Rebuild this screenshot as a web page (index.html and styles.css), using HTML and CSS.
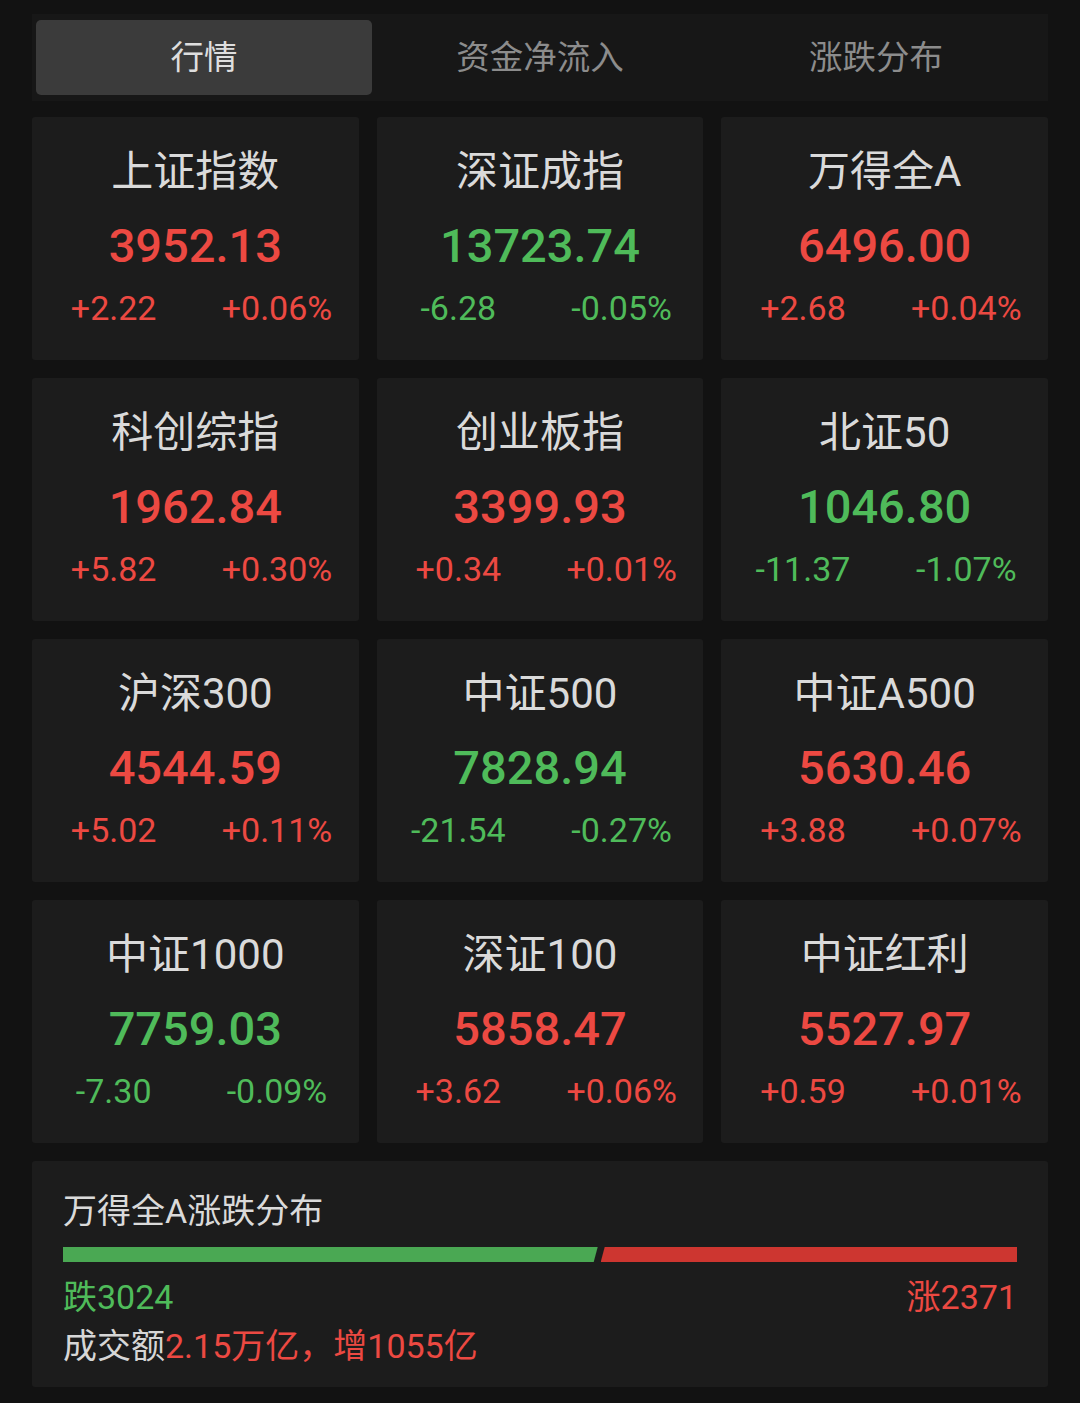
FILE: index.html
```html
<!DOCTYPE html>
<html lang="zh-CN">
<head>
  <meta charset="UTF-8">
  <meta name="viewport" content="width=device-width, initial-scale=1.0">
  <title>行情</title>
  <link rel="stylesheet" href="styles.css">
</head>
<body>
  <div class="tabs">
    <div class="tab active">行情</div>
    <div class="tab">资金净流入</div>
    <div class="tab">涨跌分布</div>
  </div>

  <div class="grid">
    <div class="card up">
      <div class="name">上证指数</div>
      <div class="price">3952.13</div>
      <div class="change"><span>+2.22</span><span>+0.06%</span></div>
    </div>
    <div class="card down">
      <div class="name">深证成指</div>
      <div class="price">13723.74</div>
      <div class="change"><span>-6.28</span><span>-0.05%</span></div>
    </div>
    <div class="card up">
      <div class="name">万得全A</div>
      <div class="price">6496.00</div>
      <div class="change"><span>+2.68</span><span>+0.04%</span></div>
    </div>

    <div class="card up">
      <div class="name">科创综指</div>
      <div class="price">1962.84</div>
      <div class="change"><span>+5.82</span><span>+0.30%</span></div>
    </div>
    <div class="card up">
      <div class="name">创业板指</div>
      <div class="price">3399.93</div>
      <div class="change"><span>+0.34</span><span>+0.01%</span></div>
    </div>
    <div class="card down">
      <div class="name">北证50</div>
      <div class="price">1046.80</div>
      <div class="change"><span>-11.37</span><span>-1.07%</span></div>
    </div>

    <div class="card up">
      <div class="name">沪深300</div>
      <div class="price">4544.59</div>
      <div class="change"><span>+5.02</span><span>+0.11%</span></div>
    </div>
    <div class="card down">
      <div class="name">中证500</div>
      <div class="price">7828.94</div>
      <div class="change"><span>-21.54</span><span>-0.27%</span></div>
    </div>
    <div class="card up">
      <div class="name">中证A500</div>
      <div class="price">5630.46</div>
      <div class="change"><span>+3.88</span><span>+0.07%</span></div>
    </div>

    <div class="card down">
      <div class="name">中证1000</div>
      <div class="price">7759.03</div>
      <div class="change"><span>-7.30</span><span>-0.09%</span></div>
    </div>
    <div class="card up">
      <div class="name">深证100</div>
      <div class="price">5858.47</div>
      <div class="change"><span>+3.62</span><span>+0.06%</span></div>
    </div>
    <div class="card up">
      <div class="name">中证红利</div>
      <div class="price">5527.97</div>
      <div class="change"><span>+0.59</span><span>+0.01%</span></div>
    </div>
  </div>

  <div class="dist">
    <div class="dist-title">万得全A涨跌分布</div>
    <div class="bar">
      <div class="bar-down" style="width: 56.05%"></div>
      <div class="bar-up"></div>
    </div>
    <div class="counts">
      <span class="green">跌3024</span>
      <span class="red">涨2371</span>
    </div>
    <div class="turnover">成交额<span class="red">2.15万亿，增1055亿</span></div>
  </div>
</body>
</html>
```

FILE: styles.css
```css
:root {
  --red: #ec4942;
  --green: #4fbb5a;
  --bar-red: #cd3630;
  --bar-green: #4aa853;
  --card-bg: #1c1c1c;
}

* {
  box-sizing: border-box;
}

body {
  margin: 0;
  padding: 14px 32px 0;
  background: #121212;
  font-family: Roboto, "Noto Sans CJK SC", sans-serif;
  color: #dcdcdc;
}

.tabs {
  display: grid;
  grid-template-columns: repeat(3, 1fr);
  padding: 6px 4px;
  background: #171717;
  margin-bottom: 16px;
}

.tab {
  height: 75px;
  padding-bottom: 6px;
  display: flex;
  align-items: center;
  justify-content: center;
  font-size: 33.5px;
  color: #8c8c8c;
}

.tab.active {
  background: #3b3b3b;
  border-radius: 5px;
  color: #dedede;
}

.grid {
  display: grid;
  grid-template-columns: repeat(3, 1fr);
  grid-auto-rows: 243px;
  gap: 18px;
}

.card {
  background: var(--card-bg);
  border-radius: 3px;
  padding-top: 31px;
  text-align: center;
}

.name {
  font-size: 42px;
  line-height: 48px;
  color: #dadada;
}

.price {
  margin-top: 20px;
  font-size: 47px;
  line-height: 60px;
  font-weight: 500;
}

.change {
  margin-top: 12px;
  display: grid;
  grid-template-columns: 1fr 1fr;
  font-size: 34px;
  line-height: 40px;
}

.card.up .price,
.card.up .change {
  color: var(--red);
}

.card.down .price,
.card.down .change {
  color: var(--green);
}

.dist {
  margin-top: 18px;
  background: var(--card-bg);
  border-radius: 3px;
  padding: 28px 31px 19px;
  font-size: 34px;
  line-height: 44px;
}

.dist-title {
  color: #dadada;
}

.bar {
  margin-top: 14px;
  height: 15px;
  display: flex;
  gap: 3px;
}

.bar-down {
  background: var(--bar-green);
  clip-path: polygon(0 0, 100% 0, calc(100% - 4px) 100%, 0 100%);
}

.bar-up {
  flex: 1;
  background: var(--bar-red);
  clip-path: polygon(4px 0, 100% 0, 100% 100%, 0 100%);
}

.counts {
  margin-top: 13px;
  display: flex;
  justify-content: space-between;
}

.turnover {
  margin-top: 5px;
  color: #d6d6d6;
}

.red {
  color: var(--red);
}

.green {
  color: var(--green);
}
```
